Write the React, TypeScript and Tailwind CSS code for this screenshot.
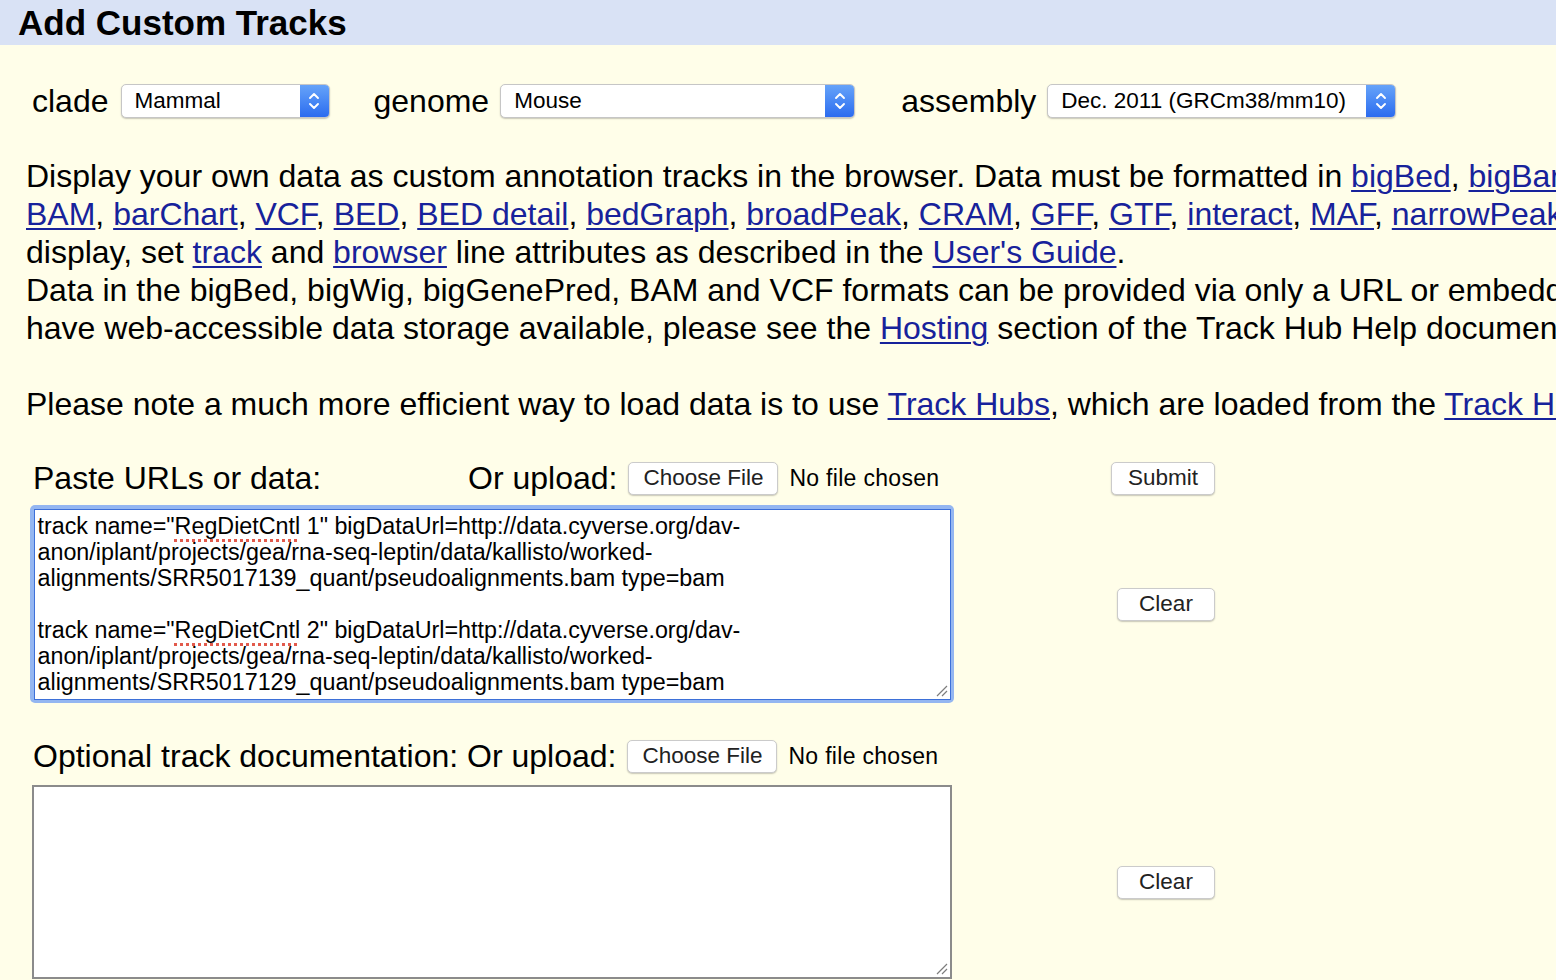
import React from "react";

const Chev = () => (
  <svg width="14" height="26" viewBox="0 0 14 26">
    <path d="M3 10 L7 6 L11 10" stroke="white" strokeWidth="1.9" fill="none" strokeLinecap="round" strokeLinejoin="round" />
    <path d="M3 16 L7 20 L11 16" stroke="white" strokeWidth="1.9" fill="none" strokeLinecap="round" strokeLinejoin="round" />
  </svg>
);

function Select({ value, cls }: { value: string; cls: string }) {
  return (
    <div className={"flex h-[34px] rounded-[5px] bg-white border border-[#c6c6c6] shadow-[0_1px_1.5px_rgba(0,0,0,0.22)] overflow-hidden " + cls}>
      <div className="flex-1 flex items-center pl-[13px] text-[22.5px] leading-[26px] text-black whitespace-nowrap">{value}</div>
      <div className="w-[29px] flex items-center justify-center bg-linear-to-b from-[#66a3f9] to-[#2c6bef]">
        <Chev />
      </div>
    </div>
  );
}

function Btn({ label, cls }: { label: string; cls: string }) {
  return (
    <div className={"flex items-center justify-center h-[33px] rounded-[5px] bg-white border border-[#cbcbcb] shadow-[0_1px_1.5px_rgba(0,0,0,0.22)] text-[22.5px] leading-[26px] text-[#222] " + cls}>
      {label}
    </div>
  );
}

const A = ({ children }: { children: React.ReactNode }) => (
  <span className="text-[#17229b] underline decoration-[1.5px] underline-offset-[3px]">{children}</span>
);

const Spell = ({ children }: { children: React.ReactNode }) => (
  <span className="underline decoration-dotted decoration-[#e25a4c] decoration-[3px] underline-offset-[5px]">{children}</span>
);

const Grip = () => (
  <svg className="absolute right-[2px] bottom-[2px]" width="14" height="14" viewBox="0 0 14 14">
    <path d="M3 13 L13 3 M8 13 L13 8" stroke="#7d7d7d" strokeWidth="1.2" />
  </svg>
);

export default function App() {
  return (
    <div
      className="w-[1556px] h-[980px] overflow-hidden bg-[#fffee9] text-black"
      style={{ fontFamily: '"Liberation Sans", Arial, sans-serif' }}
    >
      <div className="h-[45px] bg-[#d9e2f5] pl-[18px] text-[35px] font-bold leading-[45px] whitespace-nowrap">
        Add Custom Tracks
      </div>

      <div className="mt-[39px] h-[34px] flex items-center pl-[32px] text-[32px] leading-[34px] whitespace-nowrap">
        <span className="mr-[12px]">clade</span>
        <Select value="Mammal" cls="w-[209px]" />
        <span className="ml-[44px] mr-[11px]">genome</span>
        <Select value="Mouse" cls="w-[355px]" />
        <span className="ml-[46px] mr-[11px]">assembly</span>
        <Select value="Dec. 2011 (GRCm38/mm10)" cls="w-[349px]" />
      </div>

      <div className="mt-[39px] pl-[26px] text-[32px] leading-[38px] whitespace-nowrap">
        <div>
          Display your own data as custom annotation tracks in the browser. Data must be formatted in <A>bigBed</A>, <A>bigBarChart</A>, <A>bigChain</A>, <A>bigGenePred</A>
        </div>
        <div>
          <A>BAM</A>, <A>barChart</A>, <A>VCF</A>, <A>BED</A>, <A>BED detail</A>, <A>bedGraph</A>, <A>broadPeak</A>, <A>CRAM</A>, <A>GFF</A>, <A>GTF</A>, <A>interact</A>, <A>MAF</A>, <A>narrowPeak</A>, <A>Personal Genome SNP</A>
        </div>
        <div>
          display, set <A>track</A> and <A>browser</A> line attributes as described in the <A>User's Guide</A>.
        </div>
        <div>
          Data in the bigBed, bigWig, bigGenePred, BAM and VCF formats can be provided via only a URL or embedded in a track line in the box below. If you do not
        </div>
        <div>
          have web-accessible data storage available, please see the <A>Hosting</A> section of the Track Hub Help documentation.
        </div>
        <div className="h-[38px]"></div>
        <div>
          Please note a much more efficient way to load data is to use <A>Track Hubs</A>, which are loaded from the <A>Track Hubs Page</A>.
        </div>
      </div>

      <div className="mt-[37px] ml-[30px] grid grid-cols-[924px_261px]">
        <div className="flex items-center h-[36px] pl-[3px] text-[32px] leading-[36px] whitespace-nowrap">
          <span className="w-[435px]">Paste URLs or data:</span>
          <span>Or upload:</span>
          <Btn label="Choose File" cls="ml-[11px] w-[150px] h-[32px]" />
          <span className="ml-[11px] text-[23px] tracking-[0.3px]">No file chosen</span>
        </div>
        <div className="self-center justify-self-end">
          <Btn label="Submit" cls="w-[104px]" />
        </div>

        <div className="mt-[9px] h-[198px] rounded-[5px] bg-[#94b6f1] p-[3.5px]">
          <div className="h-full border-[1.5px] border-[#3d70d8] bg-white relative pl-[3px] pt-[3.5px] text-[23.3px] leading-[26px] whitespace-nowrap overflow-hidden">
            <div>track name="<Spell>RegDietCntl</Spell> 1" bigDataUrl=http://data.cyverse.org/dav-</div>
            <div>anon/iplant/projects/gea/rna-seq-leptin/data/kallisto/worked-</div>
            <div>alignments/SRR5017139_quant/pseudoalignments.bam type=bam</div>
            <div className="h-[26px]"></div>
            <div>track name="<Spell>RegDietCntl</Spell> 2" bigDataUrl=http://data.cyverse.org/dav-</div>
            <div>anon/iplant/projects/gea/rna-seq-leptin/data/kallisto/worked-</div>
            <div>alignments/SRR5017129_quant/pseudoalignments.bam type=bam</div>
            <Grip />
          </div>
        </div>
        <div className="mt-[9px] self-center justify-self-end">
          <Btn label="Clear" cls="w-[98px]" />
        </div>

        <div className="mt-[35px] flex items-center h-[36px] pl-[3px] text-[32px] leading-[36px] whitespace-nowrap">
          <span>Optional track documentation: Or upload:</span>
          <Btn label="Choose File" cls="ml-[11px] w-[150px] h-[32px]" />
          <span className="ml-[11px] text-[23px] tracking-[0.3px]">No file chosen</span>
        </div>
        <div></div>

        <div className="mt-[11px] ml-[2px] w-[920px] h-[194px] border-2 border-[#8b8b8b] bg-white relative">
          <Grip />
        </div>
        <div className="mt-[11px] self-center justify-self-end">
          <Btn label="Clear" cls="w-[98px]" />
        </div>
      </div>
    </div>
  );
}
